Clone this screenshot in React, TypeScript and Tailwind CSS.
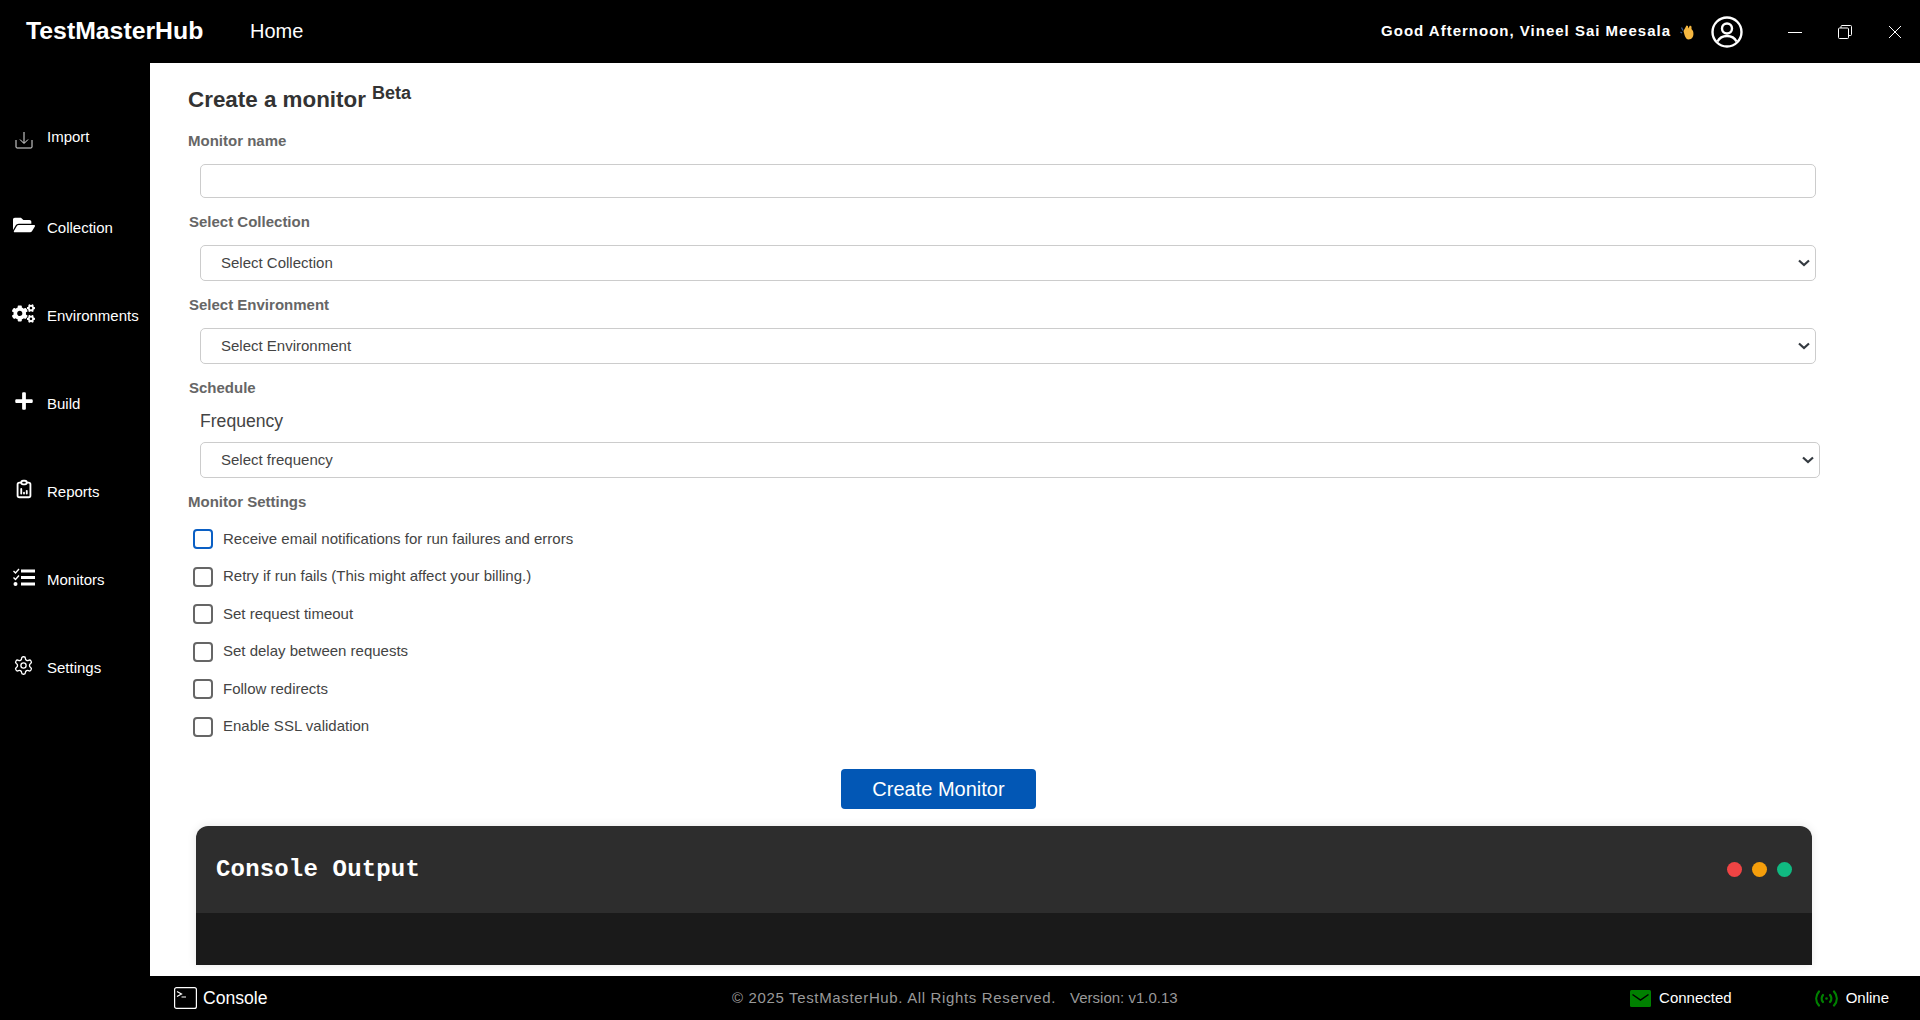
import React from "react";
import { FaFolderOpen, FaCogs, FaPlus } from "react-icons/fa";
import { TbReportAnalytics } from "react-icons/tb";
import { LuSettings } from "react-icons/lu";

function ImportIcon() {
  return (
    <svg width="18" height="18" viewBox="0 0 18 18" fill="none" stroke="#e5e5e5" strokeWidth="1" className="mt-[6px]">
      <path d="M9 1v11M5 8.500l4 4 4-4" />
      <path d="M1 9v7a1 1 0 0 0 1 1h14a1 1 0 0 0 1-1V9" />
    </svg>
  );
}
function MonitorsIcon() {
  return (
    <svg width="22" height="19" viewBox="0 0 22 19" fill="white" className="-mt-[6px]">
      <rect x="8" y="1.500" width="14" height="3" />
      <rect x="8" y="8" width="14" height="3" />
      <rect x="8" y="14.500" width="14" height="3" />
      <path d="M0.500 3l2 2 3.500-4" fill="none" stroke="white" strokeWidth="1.400" />
      <path d="M0.500 9.500l2 2 3.500-4" fill="none" stroke="white" strokeWidth="1.400" />
      <circle cx="2.500" cy="16" r="2" />
    </svg>
  );
}
function Wave() {
  return (
    <svg width="15" height="16" viewBox="0 0 15 16">
      <path d="M1.500 3.500l1.500 3M0.500 8l1.500 1" stroke="#3b5b92" strokeWidth="1.300" fill="none" />
      <path d="M3.500 7 L6.500 1.500 L8 2 L8 4.500 L10 1.500 L11.500 2.500 L11.500 5 L13 7 C14.500 12 12 15.500 8.500 15.500 C5.500 15.500 4.500 11 3.500 7Z" fill="#f5b740" />
    </svg>
  );
}
function UserCircle() {
  return (
    <svg width="32" height="32" viewBox="0 0 32 32" fill="none" stroke="white" strokeWidth="2.400">
      <circle cx="16" cy="16" r="14.500" />
      <circle cx="16" cy="12.500" r="5" />
      <path d="M6.500 25.500c2-4 5.500-5.500 9.500-5.500s7.500 1.500 9.500 5.500" />
    </svg>
  );
}
function Online() {
  return (
    <svg width="23" height="17" viewBox="0 0 23 17" fill="none" stroke="#008000" strokeWidth="2.200" strokeLinecap="round">
      <circle cx="11.500" cy="8.500" r="1.300" fill="#008000" stroke="none" />
      <path d="M8 5c-1.800 2.200-1.800 4.800 0 7M15 5c1.800 2.200 1.800 4.800 0 7" />
      <path d="M4 1.500c-3.700 4.300-3.700 9.700 0 14M19 1.500c3.700 4.300 3.700 9.700 0 14" />
    </svg>
  );
}
function Mail() {
  return (
    <svg width="21" height="17" viewBox="0 0 21 17">
      <rect width="21" height="17" rx="1.500" fill="#008000" />
      <path d="M2.500 4.500l8 5.500 8-5.500" fill="none" stroke="black" strokeWidth="1.500" />
    </svg>
  );
}
function ConsoleIcon() {
  return (
    <svg width="23" height="22" viewBox="0 0 23 22" fill="none" stroke="white" strokeWidth="1.200">
      <rect x="0.600" y="0.600" width="21.800" height="20.800" rx="2" />
      <path d="M3 4.500l4.500 2.500-4.500 2.500M7.500 10h4.500" />
    </svg>
  );
}

const up = "-mt-[6px]";
const navItems: [React.ReactNode, string][] = [
  [<ImportIcon />, "Import"],
  [<FaFolderOpen size={22} color="white" className={up} />, "Collection"],
  [<FaCogs size={23} color="white" className={up} />, "Environments"],
  [<FaPlus size={20} color="white" className={up} />, "Build"],
  [<TbReportAnalytics size={22} color="white" className={up} />, "Reports"],
  [<MonitorsIcon />, "Monitors"],
  [<LuSettings size={21} color="white" strokeWidth={1.5} className={up} />, "Settings"],
];

function Select({ label, wide }: { label: string; wide?: boolean }) {
  return (
    <div className={`relative ml-3 ${wide ? "w-[1620px]" : "w-[1616px]"}`}>
      <select className="h-9 w-full appearance-none rounded-[5px] border border-[#cccccc] bg-white pl-5 text-[15px] text-[#444444]">
        <option>{label}</option>
      </select>
      <svg width="16" height="16" viewBox="0 0 16 16" fill="none" stroke="#343a40" strokeWidth="2.200" strokeLinejoin="miter" className="absolute right-1 top-[10px]">
        <path d="m3 5.500 5 4.500 5-4.500" />
      </svg>
    </div>
  );
}

const checks = [
  "Receive email notifications for run failures and errors",
  "Retry if run fails (This might affect your billing.)",
  "Set request timeout",
  "Set delay between requests",
  "Follow redirects",
  "Enable SSL validation",
];

export default function App() {
  return (
    <div className="flex h-[1020px] w-[1920px] flex-col overflow-hidden bg-black font-['Liberation_Sans',sans-serif]">
      <header className="flex h-[63px] shrink-0 items-center text-white">
        <div className="mb-[2px] ml-[26px] w-[224px] text-[24.800px] font-bold">TestMasterHub</div>
        <div className="mb-[2px] text-xl">Home</div>
        <div className="ml-auto flex items-center">
          <span className="text-[15px] font-bold tracking-[1px]">Good Afternoon, Vineel Sai Meesala</span>
          <span className="ml-[9px]"><Wave /></span>
          <span className="ml-[16px]"><UserCircle /></span>
          <div className="mr-[18px] ml-[45px] flex items-center gap-[36px]">
            <svg width="14" height="14" viewBox="0 0 14 14" stroke="white" strokeWidth="1"><path d="M0 7.500h14" /></svg>
            <svg width="14" height="14" viewBox="0 0 14 14" fill="none" stroke="white" strokeWidth="1"><rect x="0.500" y="3" width="10" height="10.500" rx="1" /><path d="M3 3V1.500a1 1 0 0 1 1-1h8.500a1 1 0 0 1 1 1v8a1 1 0 0 1-1 1H10.500" /></svg>
            <svg width="14" height="14" viewBox="0 0 14 14" stroke="white" strokeWidth="1"><path d="M1 1l12 12M13 1L1 13" /></svg>
          </div>
        </div>
      </header>
      <div className="flex min-h-0 flex-1">
        <nav className="flex w-[150px] shrink-0 flex-col pt-[64px] text-white">
          {navItems.map(([icon, label], i) => (
            <div key={label} className={`flex h-5 items-center ${i === 0 ? "mb-[71px]" : "mb-[68px]"}`}>
              <div className="flex w-[47px] shrink-0 justify-center">{icon}</div>
              <span className="text-[15px]">{label}</span>
            </div>
          ))}
        </nav>
        <main className="min-w-0 flex-1 overflow-hidden bg-white pl-[38px]">
          <div className="flex h-[68px] items-start pt-[19px] text-[#333333]">
            <h1 className="text-[22.400px] leading-[36px] font-bold">Create a monitor</h1>
            <span className="mt-[1px] ml-[6px] text-lg leading-[20px] font-bold">Beta</span>
          </div>
          <label className="block text-[15px] leading-5 font-bold text-[#666666]">Monitor name</label>
          <input className="mt-[13px] ml-3 block h-[34px] w-[1616px] rounded-[5px] border border-[#cccccc]" />
          <label className="mt-[14px] ml-[1px] block text-[15px] leading-5 font-bold text-[#666666]">Select Collection</label>
          <div className="mt-[13px]"><Select label="Select Collection" /></div>
          <label className="mt-[14px] ml-[1px] block text-[15px] leading-5 font-bold text-[#666666]">Select Environment</label>
          <div className="mt-[13px]"><Select label="Select Environment" /></div>
          <label className="mt-[14px] ml-[1px] block text-[15px] leading-5 font-bold text-[#666666]">Schedule</label>
          <div className="mt-[11px] ml-3 text-[17.600px] leading-6 text-[#444444]">Frequency</div>
          <div className="mt-[9px]"><Select label="Select frequency" wide /></div>
          <label className="mt-[14px] block text-[15px] leading-5 font-bold text-[#666666]">Monitor Settings</label>
          <div className="mt-[17px] ml-[5px] flex flex-col gap-[17.500px]">
            {checks.map((c, i) => (
              <label key={c} className="flex h-5 items-center">
                <span className={`h-5 w-5 rounded-[4px] border-2 ${i === 0 ? "border-[#0a5fc4]" : "border-[#666666]"}`} />
                <span className="ml-[10px] text-[15px] text-[#444444]">{c}</span>
              </label>
            ))}
          </div>
          <button className="mt-[32px] ml-[653px] block h-10 w-[195px] rounded-[4px] bg-[#0257b5] text-xl text-white">Create Monitor</button>
          <div className="mt-[17px] ml-[8px] w-[1616px] overflow-hidden rounded-t-[12px] shadow-[0_0_10px_rgba(0,0,0,0.1)]">
            <div className="flex h-[87px] items-center justify-between bg-[#2d2d2d] px-5">
              <span className="mt-[2px] font-['Liberation_Mono',monospace] text-2xl font-bold tracking-[0.17px] text-white">Console Output</span>
              <div className="flex gap-[10px]">
                <span className="h-[15px] w-[15px] rounded-full bg-[#ef4444]" />
                <span className="h-[15px] w-[15px] rounded-full bg-[#f59e0b]" />
                <span className="h-[15px] w-[15px] rounded-full bg-[#10b981]" />
              </div>
            </div>
            <div className="h-[52px] bg-[#1a1a1a]" />
          </div>
        </main>
      </div>
      <footer className="flex h-[44px] shrink-0 items-center text-white">
        <div className="ml-[174px] flex w-[558px] shrink-0 items-center">
          <ConsoleIcon />
          <span className="ml-[6px] text-[17.600px]">Console</span>
        </div>
        <div className="text-[15px] tracking-[0.65px] text-[#999999]">
          © 2025 TestMasterHub. All Rights Reserved.
          <span className="ml-[14px] tracking-normal">Version: v1.0.13</span>
        </div>
        <div className="ml-auto flex items-center text-[15px]">
          <Mail />
          <span className="ml-[8px]">Connected</span>
          <span className="ml-[83px]"><Online /></span>
          <span className="mr-[31px] ml-[8px]">Online</span>
        </div>
      </footer>
    </div>
  );
}
